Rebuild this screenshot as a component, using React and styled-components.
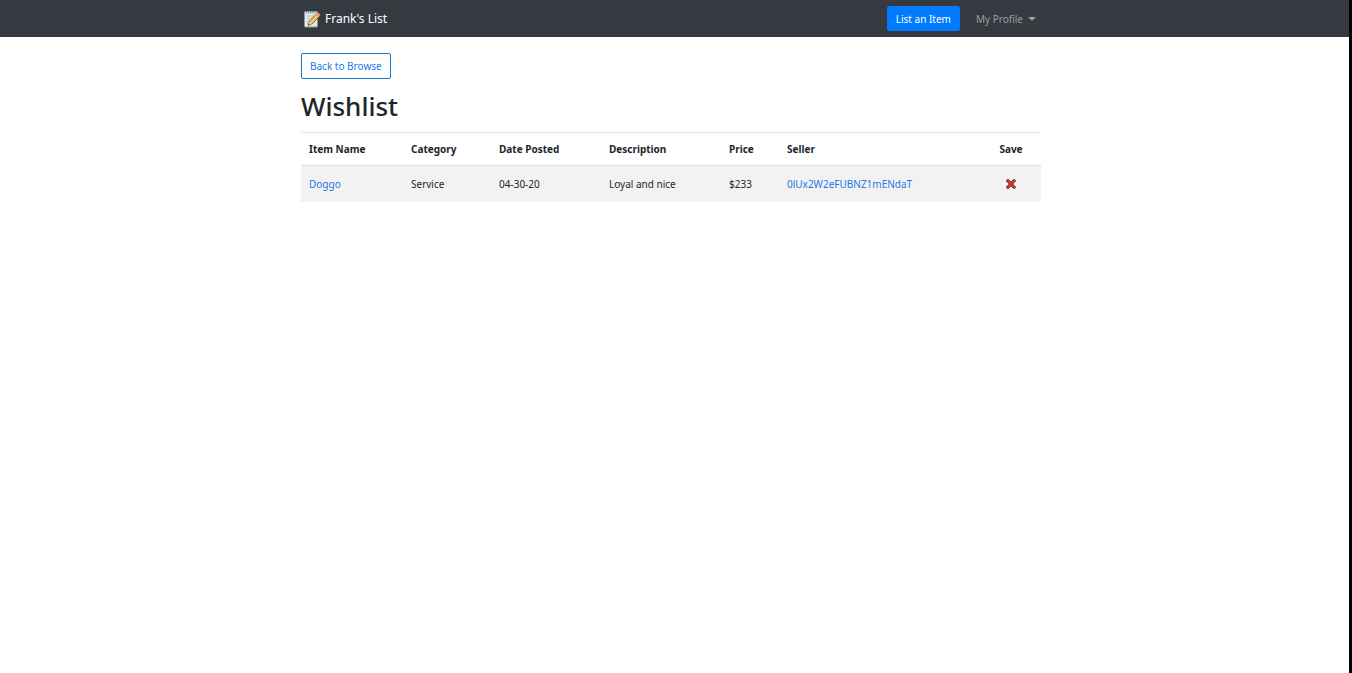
import React from "react";
import styled, { createGlobalStyle, css } from "styled-components";

const GlobalStyle = createGlobalStyle`
  *, *::before, *::after { box-sizing: border-box; }
  body {
    margin: 0;
    min-height: 100vh;
    border-right: 3px solid #000;
    background: #fff;
    color: #212529;
    font-family: "Noto Sans", "Open Sans", sans-serif;
    font-size: 10px;
    line-height: 16px;
  }
`;

const Navbar = styled.header`
  background: #343a40;
  padding-right: 7px;
`;

const Page = styled.main`
  padding: 16px 7px 16px 0;
`;

const Container = styled.div`
  width: 100%;
  max-width: 740px;
  margin: 0 auto;
`;

const NavRow = styled(Container).attrs({ as: "nav" })`
  display: flex;
  align-items: center;
  justify-content: space-between;
  height: 37px;
  padding: 0 5px 0 2px;
`;

const Brand = styled.a`
  display: flex;
  align-items: center;
  gap: 4px;
  color: #fff;
  font-size: 12px;
  line-height: 20px;
  text-decoration: none;
  svg { display: block; }
`;

const NavActions = styled.div`
  display: flex;
  align-items: center;
  gap: 16px;
`;

const buttonBase = css`
  height: ${(p) => p.$height}px;
  padding: 0 8px;
  border: 1px solid #007bff;
  border-radius: 2px;
  font-family: inherit;
  font-size: 10px;
  line-height: 16px;
  white-space: nowrap;
  cursor: pointer;
`;

const PrimaryButton = styled.button`
  ${buttonBase}
  background: #007bff;
  color: #fff;
`;

const OutlineButton = styled.button`
  ${buttonBase}
  display: block;
  background: transparent;
  border-color: #1a75c4;
  color: #2478e8;
`;

const ProfileToggle = styled.button`
  display: flex;
  align-items: center;
  gap: 5px;
  padding: 0;
  border: 0;
  background: none;
  color: #9a9da0;
  font-family: inherit;
  font-size: 10px;
  line-height: 16px;
  cursor: pointer;
  &::after {
    content: "";
    border-top: 4px solid currentColor;
    border-left: 4px solid transparent;
    border-right: 4px solid transparent;
  }
`;

const Title = styled.h1`
  margin: 11px 0 10px;
  font-size: 26px;
  line-height: 32px;
  font-weight: 500;
`;

const Table = styled.table`
  width: 100%;
  table-layout: fixed;
  border-collapse: separate;
  border-spacing: 0;
`;

const Column = styled.col`
  width: ${(p) => (p.$width ? `${p.$width}px` : "auto")};
`;

const HeadCell = styled.th`
  padding: 8px;
  border-top: 1px solid #dee2e6;
  text-align: ${(p) => (p.$center ? "center" : "left")};
  font-weight: 700;
  white-space: nowrap;
`;

const Cell = styled.td`
  height: 37px;
  padding: 0 8px;
  border-top: 1px solid #dee2e6;
  background: #f2f2f2;
  text-align: ${(p) => (p.$center ? "center" : "left")};
  white-space: nowrap;
`;

const TextLink = styled.a`
  color: #2478e8;
  text-decoration: none;
`;

const RemoveButton = styled.button`
  display: block;
  margin: 0 auto;
  padding: 0;
  border: 0;
  background: none;
  cursor: pointer;
  svg { display: block; }
`;

const MemoIcon = () => (
  <svg width="18" height="18" viewBox="0 0 18 18" aria-hidden="true">
    <rect x="1.5" y="1.5" width="13" height="15.5" rx="1" fill="#dfe8e8" stroke="#8b9999" />
    <path d="M3 2.5h10" stroke="#6f8588" strokeWidth="1.6" strokeDasharray="1.2 .9" />
    <path d="M4 6h7M4 8.5h5M4 11h3M4 13.5h2" stroke="#a9bdc1" strokeWidth=".9" />
    <path d="M5.2 15.3l1.2-4L14 3.4l2.8 2.7-7.6 7.8z" fill="#f6b84a" stroke="#5d4420" strokeWidth=".7" />
    <path d="M13 4.4l1.2-1.3q.8-.7 1.6 0l1 1q.8.8 0 1.6L15.7 7z" fill="#e8917e" />
    <path d="M7.8 12.3l6.2-6.4" stroke="#ffdb82" strokeWidth="1" />
    <path d="M5.2 15.3l1.2-3.6 2.4 2.3z" fill="#e9d3a8" />
    <path d="M5 15.5l.6-1.8 1.2 1.2z" fill="#292b2c" />
  </svg>
);

const CrossIcon = () => (
  <svg width="12" height="12" viewBox="0 0 12 12" aria-hidden="true">
    <path
      d="M1.2 2.9L2.9 1.2Q4.6 2.3 6 4.1 7.4 2.3 9.2 1.2L10.8 2.8Q9 4.1 7.8 6 9 7.8 10.8 9.2L9.2 10.8Q7.4 9.6 6 7.8 4.6 9.6 2.8 10.8L1.2 9.1Q3.1 7.7 4.2 6 3.1 4.2 1.2 2.9Z"
      fill="#c9402a"
      stroke="#702018"
      strokeWidth=".9"
      strokeLinejoin="round"
    />
  </svg>
);

const columns = [
  { label: "Item Name", width: 102 },
  { label: "Category", width: 88 },
  { label: "Date Posted", width: 110 },
  { label: "Description", width: 120 },
  { label: "Price", width: 58 },
  { label: "Seller" },
  { label: "Save", width: 60, center: true },
];

const items = [
  {
    name: "Doggo",
    category: "Service",
    posted: "04-30-20",
    description: "Loyal and nice",
    price: "$233",
    seller: "0lUx2W2eFUBNZ1mENdaT",
  },
];

export default function App() {
  return (
    <>
      <GlobalStyle />
      <Navbar>
        <NavRow>
          <Brand href="#">
            <MemoIcon />
            Frank's List
          </Brand>
          <NavActions>
            <PrimaryButton type="button" $height={25}>List an Item</PrimaryButton>
            <ProfileToggle type="button" aria-haspopup="true">My Profile</ProfileToggle>
          </NavActions>
        </NavRow>
      </Navbar>
      <Page>
        <Container>
          <OutlineButton type="button" $height={26}>Back to Browse</OutlineButton>
          <Title>Wishlist</Title>
          <Table>
            <colgroup>
              {columns.map((c) => <Column key={c.label} $width={c.width} />)}
            </colgroup>
            <thead>
              <tr>
                {columns.map((c) => (
                  <HeadCell key={c.label} scope="col" $center={c.center}>{c.label}</HeadCell>
                ))}
              </tr>
            </thead>
            <tbody>
              {items.map((item) => (
                <tr key={item.name}>
                  <Cell><TextLink href="#">{item.name}</TextLink></Cell>
                  <Cell>{item.category}</Cell>
                  <Cell>{item.posted}</Cell>
                  <Cell>{item.description}</Cell>
                  <Cell>{item.price}</Cell>
                  <Cell><TextLink href="#">{item.seller}</TextLink></Cell>
                  <Cell $center>
                    <RemoveButton type="button" aria-label="Remove from wishlist">
                      <CrossIcon />
                    </RemoveButton>
                  </Cell>
                </tr>
              ))}
            </tbody>
          </Table>
        </Container>
      </Page>
    </>
  );
}
